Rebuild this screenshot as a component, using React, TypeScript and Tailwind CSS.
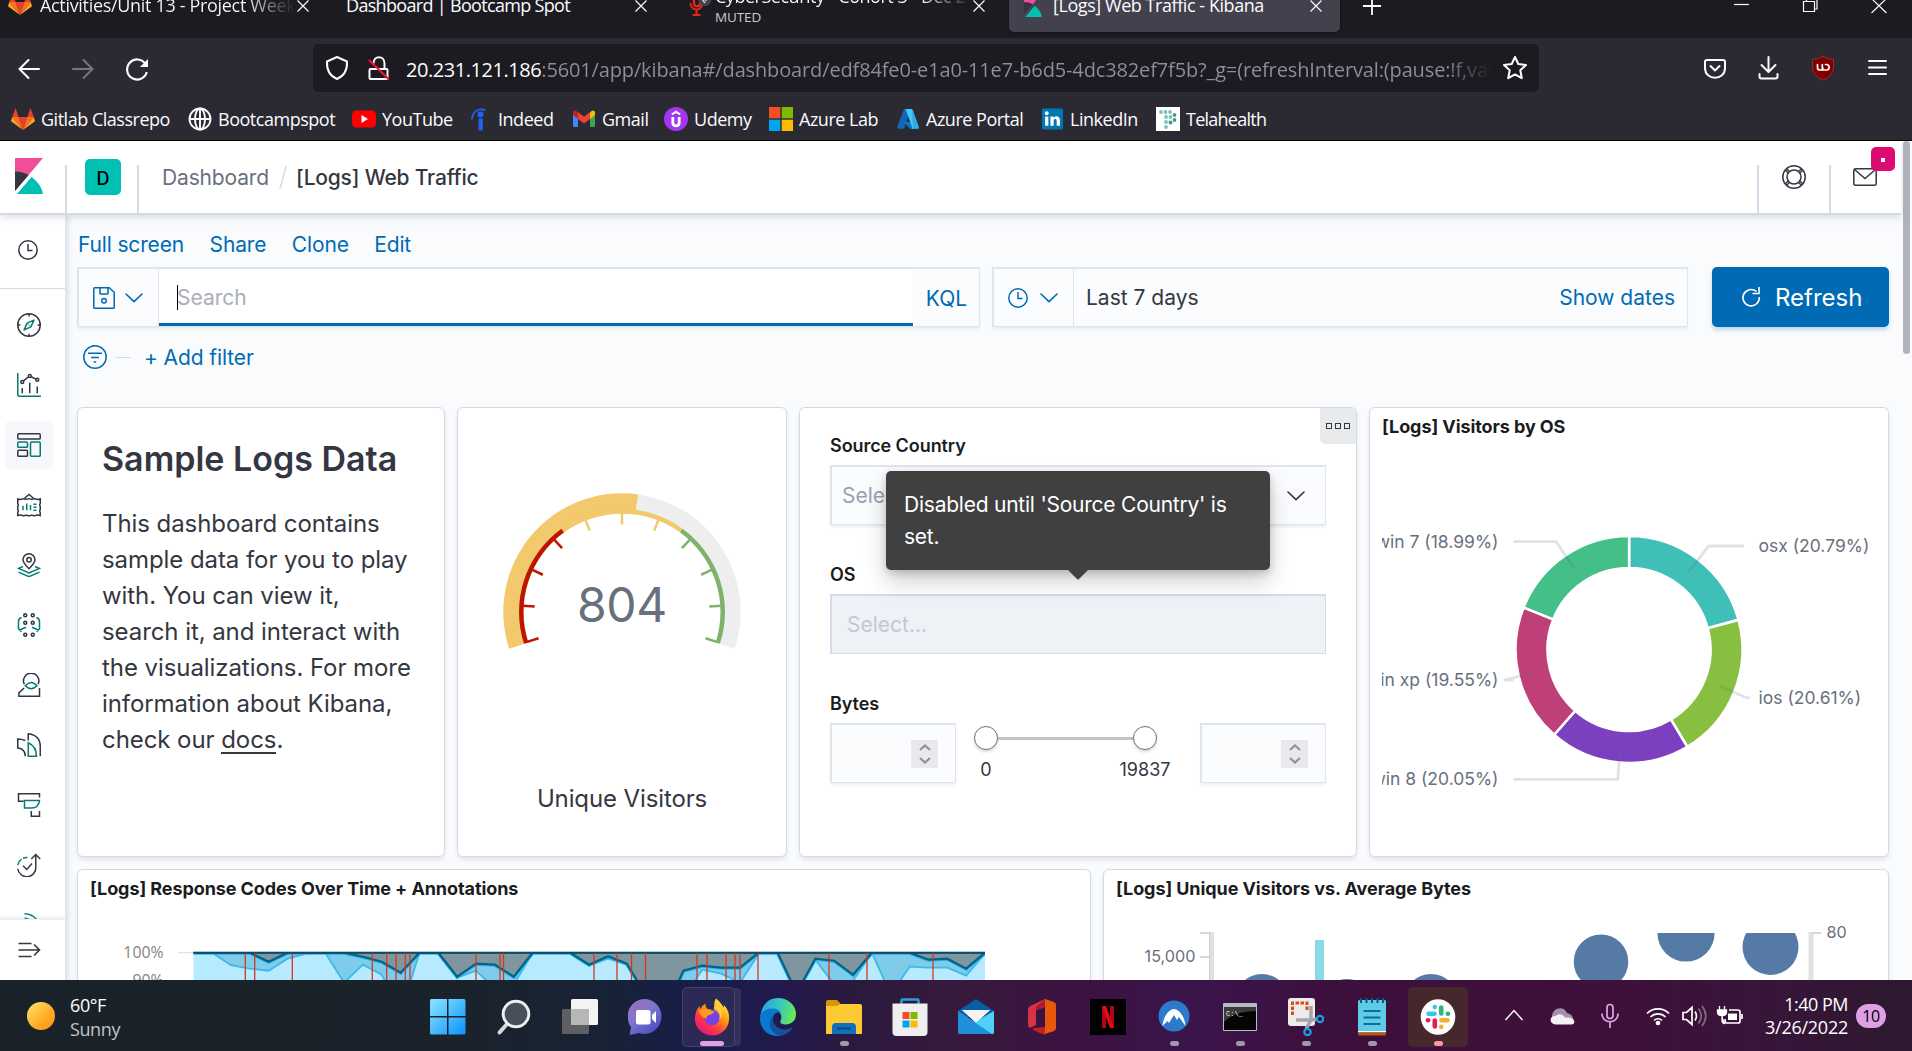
import React from "react";

type Kids = { children?: React.ReactNode; className?: string };

const polar = (cx: number, cy: number, r: number, deg: number) => {
  const a = (deg * Math.PI) / 180;
  return [cx + r * Math.sin(a), cy - r * Math.cos(a)];
};

function ringPath(cx: number, cy: number, ro: number, ri: number, a0: number, a1: number) {
  const [x0, y0] = polar(cx, cy, ro, a0);
  const [x1, y1] = polar(cx, cy, ro, a1);
  const [x2, y2] = polar(cx, cy, ri, a1);
  const [x3, y3] = polar(cx, cy, ri, a0);
  const big = a1 - a0 > 180 ? 1 : 0;
  return `M${x0} ${y0}A${ro} ${ro} 0 ${big} 1 ${x1} ${y1}L${x2} ${y2}A${ri} ${ri} 0 ${big} 0 ${x3} ${y3}Z`;
}

/* ---------- browser chrome icons ---------- */

const GitlabIcon = () => (
  <svg width="24" height="24" viewBox="0 0 24 24" className="shrink-0">
    <path d="M12 23 7.6 10h8.8z" fill="#e24329" />
    <path d="M12 23 7.6 10H1.2z" fill="#fc6d26" />
    <path d="M12 23 16.4 10h6.4z" fill="#fc6d26" />
    <path d="M1.2 10 0 14.2l12 8.8z" fill="#fca326" />
    <path d="M22.8 10 24 14.2 12 23z" fill="#fca326" />
    <path d="M1.2 10h6.4L4.6 1z" fill="#e24329" />
    <path d="M22.8 10h-6.4l3-9z" fill="#e24329" />
  </svg>
);

const KibanaLogo = ({ className }: { className: string }) => (
  <svg viewBox="0 0 28 36" preserveAspectRatio="none" className={className}>
    <path d="M0 0h28L0 33z" fill="#f04e98" />
    <path d="M0 13.6c5 0 9.600 1.300 13.600 3.500L0 33z" fill="#343741" />
    <path d="M16.500 19C22.500 23.200 26.800 29.200 28 36H2z" fill="#00bfb3" />
  </svg>
);

const Cross = ({ className }: { className: string }) => (
  <svg viewBox="0 0 12 12" className={"shrink-0 " + className} stroke="#fbfbfe" strokeWidth="1.200" fill="none">
    <path d="M.500.500l11 11M11.500.500l-11 11" />
  </svg>
);

const bookmarks: { label: string; w: string; icon: React.ReactNode }[] = [
  { label: "Gitlab Classrepo", w: "w-[177px]", icon: <GitlabIcon /> },
  {
    label: "Bootcampspot",
    w: "w-[164px]",
    icon: (
      <svg width="24" height="24" viewBox="0 0 24 24" fill="none" stroke="#fbfbfe" strokeWidth="1.900">
        <circle cx="12" cy="12" r="10.500" />
        <ellipse cx="12" cy="12" rx="5" ry="10.500" />
        <path d="M1.500 12h21M12 1.500v21" />
      </svg>
    ),
  },
  {
    label: "YouTube",
    w: "w-[114px]",
    icon: (
      <svg width="24" height="24" viewBox="0 0 24 24">
        <rect y="3.500" width="24" height="17" rx="4.500" fill="#f00" />
        <path d="M9.500 8v8l6.500-4z" fill="#fff" />
      </svg>
    ),
  },
  {
    label: "Indeed",
    w: "w-[106px]",
    icon: (
      <svg width="26" height="24" viewBox="0 0 26 24">
        <path d="M6 12.500C6 4.500 13 .500 19.500 3.500" fill="none" stroke="#2164f3" strokeWidth="1.700" />
        <circle cx="14.500" cy="7.500" r="3" fill="#2164f3" />
        <rect x="12.500" y="11.500" width="4.300" height="12" rx="1" fill="#2164f3" />
      </svg>
    ),
  },
  {
    label: "Gmail",
    w: "w-[92px]",
    icon: (
      <svg width="24" height="24" viewBox="0 0 24 24">
        <path d="M1 5.500V18.500q0 1.500 1.500 1.500H6V10z" fill="#4285f4" />
        <path d="M23 5.500V18.500q0 1.500-1.500 1.500H18V10z" fill="#34a853" />
        <path d="M18 6v6l5-4V6c0-2.500-2.500-3-3.800-1.800z" fill="#fbbc04" />
        <path d="M6 6v6L1 8V6c0-2.500 2.500-3 3.800-1.800z" fill="#c5221f" />
        <path d="M6 12V5l6 4.800L18 5v7l-6 4.600z" fill="#ea4335" />
      </svg>
    ),
  },
  {
    label: "Udemy",
    w: "w-[105px]",
    icon: (
      <svg width="24" height="24" viewBox="0 0 24 24">
        <circle cx="12" cy="12" r="12" fill="#a435f0" />
        <path d="M7.800 7.500 12 4.800l4.200 2.700" stroke="#fff" strokeWidth="2" fill="none" />
        <path d="M8.800 10v5.500c0 4.500 6.400 4.500 6.400 0V10" stroke="#fff" strokeWidth="2.800" fill="none" />
      </svg>
    ),
  },
  {
    label: "Azure Lab",
    w: "w-[127px]",
    icon: (
      <svg width="24" height="24" viewBox="0 0 24 24">
        <path d="M0 0h11.300v11.300H0z" fill="#f25022" />
        <path d="M12.700 0H24v11.300H12.700z" fill="#7fba00" />
        <path d="M0 12.700h11.300V24H0z" fill="#00a4ef" />
        <path d="M12.700 12.700H24V24H12.700z" fill="#ffb900" />
      </svg>
    ),
  },
  {
    label: "Azure Portal",
    w: "w-[145px]",
    icon: (
      <svg width="24" height="24" viewBox="0 0 24 24">
        <path d="M8.300 2h6.800L8 21.700H2q-1.300 0-.800-1.400L7.500 3q.2-.8.8-1z" fill="#1366b5" />
        <path d="M18 15H8l6 6.700h6z" fill="#0078d4" />
        <path d="M15.800 2q.6.200.9 1l6.200 17.300q.4 1.400-.9 1.400h-6.700q1.200-.4.800-1.700L9.400 2z" fill="#3ccbf4" />
        <path d="M15.800 2q.6.200.9 1l6.200 17.300q.4 1.400-.9 1.400h-5z" fill="#2892df" opacity=".6" />
      </svg>
    ),
  },
  {
    label: "LinkedIn",
    w: "w-[115px]",
    icon: (
      <svg width="23" height="24" viewBox="0 0 24 24">
        <rect x="1" y="1" width="22" height="22" rx="1.500" fill="#0077b5" />
        <circle cx="6" cy="6" r="2" fill="#fff" />
        <path d="M4.300 9.300h3.400V19H4.300zM9.800 9.300h3.300v1.400c1.600-2.600 6.700-2.300 6.700 2.800V19h-3.400v-5c0-2.600-3.200-2.500-3.200 0v5H9.800z" fill="#fff" />
      </svg>
    ),
  },
  {
    label: "Telahealth",
    w: "w-[120px] tracking-[-0.75px]",
    icon: (
      <svg width="24" height="24" viewBox="0 0 24 24">
        <path d="M0 0h24v24H0z" fill="#fff" />
        {[
          [5, 5], [9.500, 5], [14, 5], [18.500, 8], [18.500, 13], [14.500, 15.500], [10, 10], [10, 15], [10, 20], [14.500, 10],
        ].map(([x, y], i) => (
          <circle key={i} cx={x} cy={y} r="1.900" fill={i > 2 && i < 6 ? "#3f9c94" : "#7cc2b8"} />
        ))}
      </svg>
    ),
  },
];

function Chrome() {
  return (
    <div className="shrink-0 border-b border-black bg-[#2b2a33] font-['Open_Sans',sans-serif] text-[18px] tracking-[-0.48px] whitespace-nowrap text-[#fbfbfe]">
      {/* tab strip */}
      <div className="flex h-[38px] overflow-hidden bg-[#1c1b22]">
        <div className="flex h-[10px] w-[332px] shrink-0 items-center pl-2">
          <div className="-mt-[3px] flex h-[24px] items-center">
            <GitlabIcon />
          </div>
          <div className="ml-2 w-[256px] shrink-0 overflow-hidden bg-linear-to-r from-[#fbfbfe] from-80% to-[#1c1b22] bg-clip-text tracking-[-0.32px] text-transparent">
            Activities/Unit 13 - Project Week
          </div>
          <Cross className="mt-0.5 ml-px size-3" />
        </div>
        <div className="flex h-[10px] w-[345px] shrink-0 items-center pl-[14px] tracking-[-0.68px]">
          <span className="w-[289px] shrink-0">Dashboard | Bootcamp Spot</span>
          <Cross className="mt-0.5 size-3" />
        </div>
        <div className="flex w-[332px] shrink-0 pl-[12px]">
          <svg width="24" height="18" viewBox="0 0 24 18" fill="none" className="shrink-0">
            <path d="M5 0v3c0 4.500 6 4.500 6 0V0" stroke="#e3261a" strokeWidth="2.400" />
            <path d="M1.500 3c0 8.500 12 8.500 12 0M7.500 9.500v5.200M3.500 15h8" stroke="#e3261a" strokeWidth="2" />
            <circle cx="16" cy="-.500" r="6.500" fill="#42414d" />
            <path d="M13-1l3 4M16-2l1 3" stroke="#cfcfd8" strokeWidth="1.500" />
          </svg>
          <div className="-mt-[17px] ml-[2px] w-[258px] shrink-0">
            <div className="h-[26px] bg-linear-to-r from-[#fbfbfe] from-80% to-[#1c1b22] bg-clip-text leading-[26px] text-transparent">
              CyberSecurity - Cohort 3 - Dec 2
            </div>
            <div className="text-[13.500px] leading-4 tracking-[-0.1px] text-[#c9c9d0]">MUTED</div>
          </div>
          <Cross className="size-3" />
        </div>
        <div className="h-[32px] w-[331px] shrink-0 rounded-b-[5px] bg-[#42414d] shadow-[0_0_3px_rgba(0,0,0,0.6)]">
          <div className="flex h-[10px] items-center pl-[15px]">
            <KibanaLogo className="h-[24px] w-[18px]" />
            <span className="ml-[11px] w-[256px] tracking-[-0.44px]">[Logs] Web Traffic - Kibana</span>
            <Cross className="mt-0.5 ml-px size-3" />
          </div>
        </div>
        <svg width="572" height="38" viewBox="1340 0 572 38" fill="none" stroke="#fbfbfe">
          <path d="M1363 6h18M1372-3v18" strokeWidth="1.800" />
          <path d="M1734 4.500h15" strokeWidth="1.200" />
          <path d="M1803.500 1.500h11v10h-11zM1806.500 1.500v-3M1814.500 9h2.500V-2" strokeWidth="1.200" />
          <path d="M1871.500-1.500l15 14.500M1886.500-1.500l-15 14.500" strokeWidth="1.200" />
        </svg>
      </div>
      {/* toolbar */}
      <div className="flex h-[60px] items-center">
        <svg width="313" height="60" viewBox="0 38 313 60" fill="none" stroke="#fbfbfe" strokeWidth="2">
          <path d="M39 69H19.500M28.500 60l-9 9 9 9" strokeLinecap="round" />
          <path d="M73 69h19.500M83.500 60l9 9-9 9" stroke="#77767f" strokeLinecap="round" />
          <path d="M145.500 64a10 10 0 1 0 1.300 8" strokeWidth="2.200" />
          <path d="M148 59v8h-8z" fill="#fbfbfe" stroke="none" />
        </svg>
        <div className="flex h-[48px] w-[1226px] items-center overflow-hidden rounded-[5px] bg-[#1c1b22]">
          <svg width="93" height="48" viewBox="313 44 93 48" fill="none" stroke="#fbfbfe" strokeWidth="2" className="shrink-0">
            <path d="M337 57l10 4.500c.5 9-3 14.500-10 17.500-7-3-10.500-8.500-10-17.500z" strokeLinejoin="round" />
            <path d="M370.500 69h16q1 0 1 1v8q0 1-1 1h-16q-1 0-1-1v-8q0-1 1-1zM373.500 63.500c0-8.500 11-8.500 11 0V69" />
            <path d="M369 60l20 19.500" stroke="#ff0d3c" />
          </svg>
          <div className="mt-[3px] flex w-[1088px] overflow-hidden text-[20px]">
            <span className="tracking-[-0.45px]">20.231.121.186</span>
            <span className="bg-linear-to-r from-[#8f8f99] from-95% to-[#1c1b22] bg-clip-text tracking-[-0.14px] text-transparent">
              :5601/app/kibana#/dashboard/edf84fe0-e1a0-11e7-b6d5-4dc382ef7f5b?_g=(refreshInterval:(pause:!f,val
            </span>
          </div>
          <svg width="26" height="26" viewBox="0 0 26 26" className="ml-[8px] shrink-0" fill="none" stroke="#fbfbfe" strokeWidth="2" strokeLinejoin="round">
            <path d="M13 2l3.300 7 7.700 1-5.700 5.300 1.500 7.900L13 19.400l-6.800 3.800 1.500-7.900L2 10l7.700-1z" />
          </svg>
        </div>
        <svg width="373" height="60" viewBox="1539 38 373 60" fill="none" stroke="#fbfbfe" strokeWidth="2" strokeLinecap="round" strokeLinejoin="round">
          <path d="M1707 60h16q2 0 2 2v6c0 13-20 13-20 0v-6q0-2 2-2zM1710.500 66l4.500 4.500 4.500-4.500" />
          <path d="M1768.500 57v14.500M1761.500 65l7 7 7-7M1759.500 74v2.500q0 2 2 2h14q2 0 2-2V74" />
          <path d="M1823 56.500q5 3 10.500 3v8q0 8-10.500 12.500-10.500-4.500-10.500-12.500v-8q5.500 0 10.500-3z" fill="#800000" stroke="#a33" strokeWidth=".800" />
          <path d="M1817.500 64.500v3q0 2.500 2.400 2.500h2.400v-5.500M1825.500 64.500h1a2.600 2.750 0 1 1 0 5.500h-3.800v-2.500" strokeWidth="1.700" />
          <path d="M1869 61h17M1869 67.500h17M1869 74h17" />
        </svg>
      </div>
      {/* bookmarks */}
      <div className="flex h-[42px] items-center pl-[11px]">
        {bookmarks.map((b) => (
          <div key={b.label} className={"flex shrink-0 items-center " + b.w}>
            {b.icon}
            <span className="ml-[6px] pt-px">{b.label}</span>
          </div>
        ))}
      </div>
    </div>
  );
}

/* ---------- Kibana side navigation ---------- */

const D = "#343741";
const G = "#017d73";

const NavIcon = ({ children }: Kids) => (
  <svg width="24" height="24" viewBox="0 0 32 32" fill="none" strokeWidth="2" stroke={D}>
    {children}
  </svg>
);

const navIcons: React.ReactNode[] = [
  <NavIcon key="discover">
    <circle cx="16" cy="16" r="15" />
    <path d="M16 1v3.500M16 27.500V31M1 16h3.500M27.500 16H31" />
    <path d="M22.500 9.500l-4 9-9 4 4-9z" stroke={G} strokeLinejoin="round" />
    <path d="M13.500 13.500l5 5" stroke={G} strokeWidth="1" />
  </NavIcon>,
  <NavIcon key="visualize">
    <path d="M1 0v29q0 2 2 2h29" stroke={G} />
    <path d="M7 27v-7M17 27V13M27 27v-9M8.500 10.500l7-5.500M19 5l7 3.500" />
    <circle cx="7" cy="12" r="2" />
    <circle cx="17" cy="4" r="2" />
    <circle cx="27" cy="9" r="2" />
  </NavIcon>,
  <NavIcon key="dashboard">
    <rect x="1" y="1" width="30" height="7" rx="1.500" />
    <rect x="1" y="12" width="13" height="7" rx="1.500" stroke={G} />
    <rect x="18" y="12" width="13" height="19" rx="1.500" stroke={G} />
    <rect x="1" y="23" width="13" height="8" rx="1.500" />
  </NavIcon>,
  <NavIcon key="canvas">
    <path d="M1 8q4 1.500 7.500-.500 3.500 1.500 7.500 0 4 1.500 7.500 0 4 2 7.500.500v6q-1.500 2 0 4v4q-1.500 2 0 4v4q-4-1.500-7.500.500-4-1.500-7.500 0-4-1.500-7.500 0-3.500-2-7.500-.500v-4q1.500-2 0-4v-4q1.500-2 0-4zM10 7l6-5 6 5" />
    <path d="M8 23v-6M13 23v-9M18 23v-7M22 15h4M22 19h4M22 23h4" stroke={G} />
  </NavIcon>,
  <NavIcon key="maps">
    <path d="M16 21C10 15 8 12 8 9a8 8 0 0 1 16 0c0 3-2 6-8 12z" />
    <circle cx="16" cy="9" r="3" />
    <path d="M8 18l-6 2.500 14 6 14-6-6-2.500M2 25.500l14 6 14-6" stroke={G} />
  </NavIcon>,
  <NavIcon key="ml">
    <circle cx="11" cy="3" r="2" />
    <circle cx="21" cy="3" r="2" />
    <circle cx="11" cy="13" r="2" />
    <circle cx="21" cy="13" r="2" />
    <circle cx="11" cy="29" r="2" />
    <circle cx="21" cy="29" r="2" />
    <path d="M6 6q-4 1.500-4 5v10l4 4M26 6q4 1.500 4 5v10l-4 4M3 23l9-4M29 23l-9-4" stroke={G} />
  </NavIcon>,
  <NavIcon key="infra">
    <path d="M9.800 15A10.200 10.200 0 1 1 28 15" />
    <path d="M9.500 20L2.500 26.500V31H30V20" />
    <path d="M11 17q8-9 15.500 0-7.500 8-15.500 0z" stroke={G} />
  </NavIcon>,
  <NavIcon key="logs">
    <path d="M15 10V1q16 2 16 17v13M11 10Q6 8 1 8v12q10 1 10 11" />
    <path d="M15 13q11 5 11 18H15z" stroke={G} />
  </NavIcon>,
  <NavIcon key="apm">
    <path d="M9 11H2V1h28v5M19 24v7h11v-7" />
    <path d="M10 10h20q-1 10-11 10h-9z" stroke={G} />
  </NavIcon>,
  <NavIcon key="uptime">
    <path d="M1 21a12 12 0 0 0 24-3V2M19 8l6-6 6 6M8 17l5 5 7-8" />
    <path d="M1 16q1-5 5-8M8 7q3-1.500 6-1" stroke={G} />
  </NavIcon>,
  <NavIcon key="siem">
    <path d="M10 1q11 0 17 9M10 7q8 0 12 9M10 13q5 0 7 7" stroke={G} />
  </NavIcon>,
];

const Clock = ({ className }: { className: string }) => (
  <svg viewBox="0 0 20 20" fill="none" strokeWidth="1.500" stroke="currentColor" className={className}>
    <circle cx="10" cy="10" r="9.200" />
    <path d="M10 4v6.500h4.500" />
  </svg>
);

const Chevron = ({ className }: { className: string }) => (
  <svg viewBox="0 0 18 10" fill="none" strokeWidth="1.600" stroke="currentColor" strokeLinecap="round" strokeLinejoin="round" className={className}>
    <path d="M1 1l8 7.700L17 1" />
  </svg>
);

function SideNav() {
  return (
    <div className="relative z-10 flex w-[67px] shrink-0 flex-col overflow-hidden border-r-2 border-[#e1e5ee] bg-white shadow-[2px_0_5px_rgba(152,162,179,0.25)]">
      <div className="flex h-[74px] shrink-0 items-center border-b border-[#d3dae6] pl-[18px] text-[#343741]">
        <Clock className="mb-[3px] size-5" />
      </div>
      <div className="flex h-[630px] flex-col overflow-hidden pt-[6px]">
        {navIcons.map((icon, i) => (
          <div key={i} className="flex h-[60px] shrink-0 items-center pl-[5px]">
            <div className={i === 2 ? "flex size-12 items-center justify-center rounded-[5px] bg-[#f5f7fa]" : "flex size-12 items-center justify-center"}>
              {icon}
            </div>
          </div>
        ))}
      </div>
      <div className="z-10 flex h-[61px] shrink-0 items-center border-t border-[#eef0f4] bg-white pl-[17px] shadow-[0_-1px_4px_rgba(152,162,179,0.3)]">
        <svg width="24" height="18" viewBox="0 0 24 18" fill="none" stroke={D} strokeWidth="1.600">
          <path d="M1.500 2.500h13M1.500 9h21M1.500 15.500h13M17 3.500L22.500 9 17 14.500" />
        </svg>
      </div>
    </div>
  );
}

/* ---------- header ---------- */

function Header() {
  return (
    <div className="relative z-20 flex h-[74px] w-[1901px] shrink-0 border-b-2 border-[#d3dae6] bg-white shadow-[0_3px_6px_rgba(152,162,179,0.3)]">
      <div className="flex w-[67px] items-end justify-between">
        <KibanaLogo className="mb-[19px] ml-[15px] h-[36px] w-[28px]" />
        <div className="h-[48px] w-[2px] bg-[#d3dae6]" />
      </div>
      <div className="flex w-[72px] items-end justify-between pl-[18px]">
        <div className="mb-[18px] flex size-9 items-center justify-center rounded-[5px] bg-[#00bfb3] pt-[2px] text-[18px] font-medium text-black">D</div>
        <div className="h-[48px] w-[2px] bg-[#d3dae6]" />
      </div>
      <div className="flex h-[72px] flex-1 items-center pl-[23px] text-[21px] tracking-[-0.15px]">
        <span className="pt-[2px] text-[#69707d]">Dashboard</span>
        <svg width="8" height="23" viewBox="0 0 8 23" className="mr-[9px] ml-[10px]">
          <path d="M7 0L1 23" stroke="#d3dae6" strokeWidth="1.500" />
        </svg>
        <span className="pt-[2px] font-medium tracking-[-0.2px] text-[#343741]">[Logs] Web Traffic</span>
      </div>
      <div className="flex w-[144px] items-end">
        <div className="h-[48px] w-[2px] bg-[#d3dae6]" />
        <div className="flex h-[72px] w-[70px] items-center justify-center">
          <svg width="24" height="24" viewBox="0 0 24 24" fill="none" stroke={D} strokeWidth="1.500">
            <circle cx="12" cy="12" r="11.200" />
            <circle cx="12" cy="12" r="7" />
            <path d="M4.500 3.800l3.300 3M3.300 5.200l3.200 3M19.500 3.800l-3.300 3M20.700 5.200l-3.200 3M4.500 20.200l3.300-3M3.300 18.800l3.200-3M19.500 20.200l-3.300-3M20.700 18.800l-3.200-3" />
          </svg>
        </div>
        <div className="h-[48px] w-[2px] bg-[#d3dae6]" />
        <div className="relative flex h-[72px] flex-1 items-center pl-[22px]">
          <svg width="24" height="18" viewBox="0 0 24 18" fill="none" stroke={D} strokeWidth="1.500">
            <rect x=".800" y=".800" width="22.400" height="16.400" rx="2" />
            <path d="M1.500 1.500L12 10.500l10.500-9" />
          </svg>
          <div className="absolute top-[6px] left-[40px] flex size-6 items-center justify-center rounded-[5px] bg-[#dd0a73]">
            <div className="mt-[2px] size-1 bg-white" />
          </div>
        </div>
      </div>
    </div>
  );
}

/* ---------- query bar ---------- */

const field = "border-t-2 border-l-2 border-r border-b border-[#e0e4ee] bg-[#fbfcfd] shadow-[0_3px_3px_-1px_rgba(152,162,179,0.2)]";

function QueryBar() {
  return (
    <div className="text-[21px] whitespace-nowrap text-[#006bb4]">
      <div className="mt-[12px] flex h-[33px] items-center gap-[25.500px] pt-[2px] pl-[1px] tracking-[-0.15px]">
        <span>Full screen</span>
        <span>Share</span>
        <span>Clone</span>
        <span>Edit</span>
      </div>
      <div className="mt-[7px] flex h-[60px]">
        <div className={"flex w-[903px] " + field}>
          <div className="flex w-[80px] items-center border-r border-[#e0e4ee] pl-[14px]">
            <svg width="22" height="22" viewBox="0 0 22 22" fill="none" stroke="#006bb4" strokeWidth="1.500">
              <path d="M1.700.800h14.500l5 4.500v15q0 1-1 1H1.700q-.900 0-.900-1V1.700q0-.900.900-.900zM7 1v5.200q0 .800.800.800h6.400q.800 0 .800-.800V1" />
              <circle cx="11" cy="13.800" r="2.300" />
            </svg>
            <Chevron className="ml-[10px] h-[10px] w-[18px]" />
          </div>
          <div className="flex flex-1 items-center border-b-[3px] border-[#006bb4] bg-white pl-[18px] text-[#abafb8]">
            <div className="mt-[3px] h-[25px] w-px bg-black" />
            <span className="-ml-px pt-[4px]">Search</span>
          </div>
          <div className="flex w-[66px] items-center justify-center pt-[2px] pl-px">KQL</div>
        </div>
        <div className={"ml-[12px] flex w-[696px] items-center " + field}>
          <div className="flex h-full w-[80px] items-center border-r border-[#e0e4ee] pl-[14px]">
            <Clock className="size-5" />
            <Chevron className="ml-[12px] h-[10px] w-[18px]" />
          </div>
          <span className="ml-[12px] flex-1 pt-px text-[#343741]">Last 7 days</span>
          <span className="mr-[12px] pt-px">Show dates</span>
        </div>
        <div className="ml-[24px] flex w-[177px] items-center rounded-[5px] bg-[#006bb4] pl-[29px] text-[24px] text-white shadow-[0_3px_4px_rgba(0,107,180,0.25)]">
          <svg width="20" height="22" viewBox="0 0 20 22" fill="none" stroke="#fff" strokeWidth="1.600">
            <path d="M15.500 5.500A8.200 8.200 0 1 0 18.300 11M18 1v6.500h-6.500" />
          </svg>
          <span className="ml-[14px] pt-[2px]">Refresh</span>
        </div>
      </div>
      <div className="mt-[12px] flex h-[36px] items-center pl-[6px]">
        <svg width="24" height="24" viewBox="0 0 24 24" fill="none" stroke="#006bb4" strokeWidth="1.500">
          <circle cx="12" cy="12" r="11.200" />
          <path d="M5 8.200h14M8 12.500h8M10.800 17h2.400" />
        </svg>
        <div className="ml-[9px] h-px w-[15px] bg-[#d3dae6]" />
        <span className="ml-[13px] pt-[2px] tracking-[-0.1px]">+ Add filter</span>
      </div>
    </div>
  );
}

/* ---------- panels ---------- */

const panel = "relative overflow-hidden rounded-[6px] border border-[#d3dae6] bg-white shadow-[0_3px_4px_rgba(152,162,179,0.22)] ";

const Title = ({ children }: Kids) => (
  <div className="flex h-[36px] items-center pl-[12px] text-[18px] font-bold tracking-[-0.08px] text-[#1a1c21]">{children}</div>
);

function Gauge() {
  const cx = 622;
  const cy = 612;
  const tone = (d: number) => (d < -36 ? "#bd1500" : d > 36 ? "#7eb26d" : "#f2c96d");
  return (
    <svg width="328" height="448" viewBox="458 408 328 448" className="block">
      <path d={ringPath(cx, cy, 118.700, 98.500, 7.800, 108)} fill="#eee" />
      <path d={ringPath(cx, cy, 118.700, 98.500, -108, 7.800)} fill="#f2c96d" />
      <path d={ringPath(cx, cy, 103, 98.500, -108, -36)} fill="#bd1500" />
      <path d={ringPath(cx, cy, 103, 98.500, -36, 36)} fill="#f2c96d" />
      <path d={ringPath(cx, cy, 103, 98.500, 36, 108)} fill="#7eb26d" />
      {[-107.500, -86.400, -64.800, -43.200, -21.600, 0, 21.600, 43.200, 64.800, 86.400, 107.500].map((d) => {
        const [x1, y1] = polar(cx, cy, 99.500, d);
        const [x2, y2] = polar(cx, cy, 87.500, d);
        return <line key={d} x1={x1} y1={y1} x2={x2} y2={y2} stroke={tone(d)} strokeWidth="2.500" />;
      })}
      <text x="622" y="622.300" textAnchor="middle" fontSize="48" letterSpacing="-0.3" fill="#69707d">
        804
      </text>
      <text x="622" y="807" textAnchor="middle" fontSize="24" letterSpacing="-0.12" fill="#343741">
        Unique Visitors
      </text>
    </svg>
  );
}

const NumberField = () => (
  <div className={"flex h-[60px] w-[126px] items-center justify-end pr-[17px] " + field}>
    <div className="flex h-[28px] w-[27px] flex-col items-center justify-center gap-[6px] bg-[#e9e8ec] text-[#8f8f9d]">
      <svg width="12" height="7" viewBox="0 0 12 7" fill="none" stroke="currentColor" strokeWidth="2.200">
        <path d="M1 6l5-4.500L11 6" />
      </svg>
      <svg width="12" height="7" viewBox="0 0 12 7" fill="none" stroke="currentColor" strokeWidth="2.200">
        <path d="M1 1l5 4.500L11 1" />
      </svg>
    </div>
  </div>
);

const Label = ({ children }: Kids) => (
  <div className="mb-[6px] flex h-[28px] items-center pt-px text-[18px] font-semibold tracking-[-0.07px] text-[#1a1c21]">{children}</div>
);

const Thumb = () => <div className="size-6 rounded-full border-[1.500px] border-[#69707d] bg-white shadow-[0_2px_3px_rgba(0,0,0,0.15)]" />;

function Controls() {
  return (
    <div className={panel + "w-[558px] px-[30px] pt-[23px]"}>
      <div className="absolute top-0 right-0 flex h-[36px] w-[36px] items-center justify-center gap-[3px] rounded-bl-[5px] bg-[#e9eaec]">
        <div className="size-[6px] border-[1.500px] border-[#343741]" />
        <div className="size-[6px] border-[1.500px] border-[#343741]" />
        <div className="size-[6px] border-[1.500px] border-[#343741]" />
      </div>
      <Label>Source Country</Label>
      <div className={"flex h-[60px] items-center justify-between pr-[20px] pl-[10px] text-[21px] text-[#98a2b3] " + field}>
        Select...
        <Chevron className="h-[10px] w-[18px] text-[#343741]" />
      </div>
      <div className="mt-[35px]">
        <Label>OS</Label>
      </div>
      <div className="flex h-[60px] items-center border-t-2 border-r border-b border-l-2 border-[#d3dce9] bg-[#eef2f7] pl-[15px] text-[21px] text-[#c2c8d2]">
        Select...
      </div>
      <div className="mt-[35px]">
        <Label>Bytes</Label>
      </div>
      <div className="flex">
        <NumberField />
        <div className="mr-[43px] ml-[18px] w-[183px] pt-[3px]">
          <div className="flex items-center">
            <Thumb />
            <div className="h-[3px] flex-1 bg-[#c2c4c9]" />
            <Thumb />
          </div>
          <div className="mt-[8px] flex justify-between text-[18px] leading-6 text-[#343741]">
            <span className="flex w-6 justify-center">0</span>
            <span className="flex w-6 justify-center">19837</span>
          </div>
        </div>
        <NumberField />
      </div>
      {/* tooltip */}
      <div className="absolute top-[63px] left-[86px] h-[99px] w-[384px] rounded-[5px] bg-[#404040] pt-[18px] pl-[18px] text-[21px] leading-8 tracking-[-0.23px] text-white shadow-[0_12px_24px_rgba(0,0,0,0.18),0_3px_9px_rgba(0,0,0,0.18)]">
        Disabled until 'Source Country' is
        <br />
        set.
        <svg width="22" height="11" viewBox="0 0 22 11" className="absolute top-[98px] left-[181px]">
          <path d="M0 0h22L12 10q-1 1-2 0z" fill="#404040" />
        </svg>
      </div>
    </div>
  );
}

const slices = [
  { v: 20.79, c: "#40bfb8" },
  { v: 20.61, c: "#87bf40" },
  { v: 20.05, c: "#7a40bf" },
  { v: 19.55, c: "#bf4078" },
  { v: 18.99, c: "#43bf87" },
];

function Donut() {
  let a = 0;
  return (
    <svg width="518" height="412" viewBox="1370 444 518 412" className="block">
      {slices.map((s) => {
        const from = a;
        a += s.v * 3.6012;
        return <path key={s.c} d={ringPath(1629, 649.500, 113.500, 81.500, from, a)} fill={s.c} stroke="#fff" strokeWidth="2.600" />;
      })}
      <g fill="none" stroke="#69707d" strokeOpacity=".2" strokeWidth="2.800">
        <path d="M1688.500 572.300L1708.600 546H1743.800" />
        <path d="M1719.200 685.700L1746.300 697.700H1749.800" />
        <path d="M1574.100 568.300L1556.100 541.700H1513.500" />
        <path d="M1533.600 672.700L1504 680H1513.500" />
        <path d="M1620.200 746.700L1617.700 779.300H1513.500" />
      </g>
      <g fontSize="17.500" fill="#69707d">
        <text x="1758.500" y="552">osx (20.79%)</text>
        <text x="1758.500" y="704.200">ios (20.61%)</text>
      </g>
      <svg x="1382" y="500" width="130" height="320" viewBox="1382 500 130 320" fontSize="17.500" fill="#69707d" textAnchor="end">
        <text x="1498.500" y="547.900">win 7 (18.99%)</text>
        <text x="1498.500" y="686">win xp (19.55%)</text>
        <text x="1498.500" y="785.200">win 8 (20.05%)</text>
      </svg>
    </svg>
  );
}

/* Drop below the 100% line, in pixels, for each of the time buckets. */
const upper = [0, 0, 0, 0, 9, 0, 0, 0, 0, 4, 9, 20, 0, 0, 24, 11, 12, 24, 0, 0, 0, 12, 3.500, 11, 42, 60, 18, 13, 15, 15, 0, 0, 40, 6, 8, 22, 0, 0, 0, 7, 6, 16, 0];
const lower = [0, 0, 12.500, 16, 18, 6, 1, 0, 30, 12, 22, 60, 0, 0, 25, 18, 36, 32, 0, 0, 0, 12.500, 6, 12, 42, 60, 45, 17, 21, 30, 1, 0, 40, 7, 32, 28, 0, 42, 14, 15, 15, 23, 1];
const marks = [245.3, 254.7, 292.3, 372.3, 386.7, 396, 405.3, 410, 476, 500, 503.500, 594, 617, 631.500, 645.500, 697, 707, 726, 735, 740, 758, 829, 867, 933];

function ResponseCodes() {
  const pt = (v: number[]) => v.map((d, i) => `${193.300 + i * 18.850} ${952.700 + d}`).join("L");
  const L = 193.300;
  const R = 985;
  return (
    <svg width="1012" height="150" viewBox="78 906 1012 150" className="block">
      <defs>
        <clipPath id="area">
          <path d="M193.300 951.700H985V1060H193.300z" />
        </clipPath>
      </defs>
      <g fill="#848484" fontSize="15.800" className="font-['Open_Sans',sans-serif]" textAnchor="end">
        <text x="163.500" y="957.500">100%</text>
        <text x="163.500" y="986">90%</text>
      </g>
      <path d="M178 952.700h15" stroke="#ddd" />
      <g clipPath="url(#area)">
        <path d={`M${L} 952.700H${R}V1056H${L}Z`} fill="#b7e9ff" />
        <path d={`M${L} 952.700L${pt(lower)}Z`} fill="#7ecbea" stroke="#3cb9ea" strokeWidth="1.800" />
        <path d={`M${L} 952.700L${pt(upper)}Z`} fill="#80969f" stroke="#2fb2e6" strokeWidth="4" />
        <path d={`M${L} 952.700L${pt(upper)}Z`} fill="#80969f" stroke="#00648a" strokeWidth="2.200" />
        <path d={`M${L} 952.700H${R}`} stroke="#16495f" strokeWidth="2" />
        {marks.map((x) => (
          <path key={x} d={`M${x} 953V1056`} stroke="#d6361e" strokeWidth="1.300" />
        ))}
      </g>
    </svg>
  );
}

function VisitorsBytes() {
  return (
    <svg width="784" height="150" viewBox="1104 906 784 150" className="block">
      <defs>
        <clipPath id="plot">
          <path d="M1215 933h595v130h-595z" />
        </clipPath>
      </defs>
      <path d="M1211.500 932v124M1811 932v124" stroke="#e0e0e0" strokeWidth="5" />
      <path d="M1200 933h10M1200 957h9M1812 933h9" stroke="#d6d6d6" strokeWidth="2" />
      <path d="M1209.500 932v124" stroke="#d0d0d0" strokeWidth="1" />
      <path d="M1315 940h9v116h-9z" fill="#8bd9e6" />
      <g fill="#547aa5" clipPath="url(#plot)">
        <circle cx="1262" cy="1001" r="27" />
        <circle cx="1347" cy="1006" r="27" />
        <circle cx="1431" cy="1001" r="27" />
        <circle cx="1601" cy="961.700" r="27.300" />
        <circle cx="1686" cy="933" r="28.600" />
        <circle cx="1770.500" cy="947" r="28" />
      </g>
      <g fill="#69707d" fontSize="16.200">
        <text x="1195.500" y="962.200" textAnchor="end">15,000</text>
        <text x="1826.500" y="938">80</text>
      </g>
    </svg>
  );
}

function Panels() {
  return (
    <div className="mt-[32px] flex w-[1812px] flex-col gap-[12px] whitespace-nowrap">
      <div className="flex h-[450px] gap-[12px]">
        <div className={panel + "w-[368px] pt-[29px] pl-[24px] text-[#343741]"}>
          <div className="text-[34px] leading-[44px] font-semibold">Sample Logs Data</div>
          <div className="mt-[25px] text-[24px] leading-9 tracking-[-0.07px]">
            This dashboard contains
            <br />
            sample data for you to play
            <br />
            with. You can view it,
            <br />
            search it, and interact with
            <br />
            the visualizations. For more
            <br />
            information about Kibana,
            <br />
            check our <span className="inline-block h-[32px] border-b-2 border-[#343741]">docs</span>.
          </div>
        </div>
        <div className={panel + "w-[330px]"}>
          <Gauge />
        </div>
        <Controls />
        <div className={panel + "flex-1"}>
          <Title>[Logs] Visitors by OS</Title>
          <Donut />
        </div>
      </div>
      <div className="flex h-[190px] gap-[12px]">
        <div className={panel + "w-[1014px]"}>
          <Title>[Logs] Response Codes Over Time + Annotations</Title>
          <ResponseCodes />
        </div>
        <div className={panel + "flex-1"}>
          <Title>[Logs] Unique Visitors vs. Average Bytes</Title>
          <VisitorsBytes />
        </div>
      </div>
    </div>
  );
}

/* ---------- taskbar ---------- */

const taskIcons: { name: string; dot?: string; icon: React.ReactNode }[] = [
  {
    name: "start",
    icon: (
      <svg width="36" height="36" viewBox="0 0 36 36">
        <defs>
          <linearGradient id="win" x1="0" y1="0" x2="1" y2="1">
            <stop offset="0" stopColor="#8be6ff" />
            <stop offset="1" stopColor="#0a93fb" />
          </linearGradient>
        </defs>
        <path d="M1.500 0H17v17H0V1.500Q0 0 1.500 0zM18.500 0H34q1.500 0 1.500 1.500V17h-17zM0 18.500h17v17H1.500Q0 35.500 0 34zM18.500 18.500h17V34q0 1.500-1.500 1.500H18.500z" fill="url(#win)" />
      </svg>
    ),
  },
  {
    name: "search",
    icon: (
      <svg width="36" height="38" viewBox="0 0 36 38">
        <path d="M11 26L3.500 34.500" stroke="#d9dadb" strokeWidth="4" strokeLinecap="round" />
        <circle cx="20" cy="16" r="12.800" fill="#45505a" stroke="#eeeeef" strokeWidth="3" />
      </svg>
    ),
  },
  {
    name: "tasks",
    icon: (
      <svg width="36" height="36" viewBox="0 0 36 36">
        <rect x="0" y="10" width="27" height="25" rx="1.500" fill="#5f5f61" />
        <rect x="9" y="0" width="27" height="26" rx="1.500" fill="#f4f4f4" />
        <path d="M9 10h18v16H9z" fill="#b6b7b9" />
      </svg>
    ),
  },
  {
    name: "chat",
    icon: (
      <svg width="36" height="38" viewBox="0 0 36 38">
        <defs>
          <linearGradient id="chat" x1="0" y1="0" x2=".7" y2="1">
            <stop offset="0" stopColor="#a36bb5" />
            <stop offset=".5" stopColor="#7f76d0" />
            <stop offset="1" stopColor="#4a4dc4" />
          </linearGradient>
        </defs>
        <path d="M18 1a17 17.500 0 1 1-7 34L1.500 37 3 29A17 17.500 0 0 1 18 1z" fill="url(#chat)" />
        <rect x="8" y="12" width="14.500" height="14.500" rx="2" fill="#fff" />
        <path d="M24 17l4-4v12l-4-4z" fill="#fff" />
      </svg>
    ),
  },
  {
    name: "firefox",
    icon: (
      <svg width="36" height="38" viewBox="0 0 36 38">
        <defs>
          <linearGradient id="ff" x1=".9" y1=".05" x2=".25" y2="1">
            <stop offset="0" stopColor="#fff44f" />
            <stop offset=".4" stopColor="#ff980e" />
            <stop offset=".7" stopColor="#ff3647" />
            <stop offset="1" stopColor="#e31587" />
          </linearGradient>
        </defs>
        <path d="M22 .500c5 4 6 7 8 9 0-1.500 0-2-.500-3 5 5 6 10 5.500 15A17 16.500 0 0 1 1 20.500C1 15 3 11 5.500 8c0 0 .500 2.500 1 3 1-2.500 3-4.500 5-5.500-.500 2 .500 4 2 5.500 3 0 5 1 6 2 1-4 0-9 2.500-12.500z" fill="url(#ff)" />
        <circle cx="18" cy="19.500" r="7.800" fill="#7542e5" />
        <path d="M5.500 12c5-2.500 9 0 14 1 1 2-2 3.500-4.500 4-2.500 1-3 2.500-2 4-4-1-8-5-7.500-9z" fill="#ff9a1f" />
        <path d="M20 10c5 1 7 7 5 12 5-5 3-12-2-15z" fill="#ffd23c" />
      </svg>
    ),
  },
  {
    name: "edge",
    icon: (
      <svg width="36" height="38" viewBox="0 0 36 38">
        <defs>
          <linearGradient id="eg" x1="0" y1=".3" x2="1" y2=".5">
            <stop offset="0" stopColor="#2a9fe6" />
            <stop offset=".5" stopColor="#34c6c2" />
            <stop offset="1" stopColor="#6cea50" />
          </linearGradient>
        </defs>
        <path d="M1 15C3 5 10 0 18 0c10 0 18 7 18 16 0 7-5 10.500-10.500 10.500-4 0-6-1.500-5-3.500C23 18 20 11 12 11 6 11 2 14 0 19z" fill="url(#eg)" />
        <path d="M0 19c1-5 6-8.500 12-8.500 5 0 8 2 9 5-4-3-9 1-8.500 7C13 30 20 35 27 34.500 22 39 14 39 8 35.500 2 31.500-.500 25 0 19z" fill="#0b78d1" />
        <path d="M14.500 17c-4 6 1 14 10 14.500 4 0 6.500-1.500 8.500-3-4 9-15 11.500-20.500 5C8.500 28.500 9 20 14.500 17z" fill="#12529c" />
      </svg>
    ),
  },
  {
    name: "files",
    dot: "h-[5px] w-[9px] bg-[#a298ab]",
    icon: (
      <svg width="36" height="36" viewBox="0 0 36 36">
        <path d="M0 3q0-2 2-2h9l3 3v6H0z" fill="#d99506" />
        <path d="M0 7h11l3-2h20q2 0 2 2v28H0z" fill="#fdc934" />
        <path d="M6 35V28q0-4 4-4h16q4 0 4 4v7z" fill="#0f70bd" />
        <path d="M11 29.500h14" stroke="#0a4c8a" strokeWidth="2" />
      </svg>
    ),
  },
  {
    name: "store",
    icon: (
      <svg width="36" height="38" viewBox="0 0 36 38">
        <path d="M9.500 8V2.500q0-1 1-1h15q1 0 1 1V8" fill="none" stroke="#1fa3e6" strokeWidth="2.400" />
        <path d="M.500 5.500h35V34q0 4-4 4h-27q-4 0-4-4z" fill="#efefef" />
        <path d="M10.500 14h7v7h-7z" fill="#f25022" />
        <path d="M18.500 14h7v7h-7z" fill="#7fba00" />
        <path d="M10.500 22.500h7v7h-7z" fill="#00a4ef" />
        <path d="M18.500 22.500h7v7h-7z" fill="#ffb900" />
      </svg>
    ),
  },
  {
    name: "mail",
    icon: (
      <svg width="36" height="38" viewBox="0 0 36 38">
        <path d="M0 13L18 1l18 12v6H0z" fill="#0a5ca8" />
        <path d="M4 12h28L18 25z" fill="#f3f3f3" />
        <path d="M0 13l18 12L36 13v21q0 2-2 2H2q-2 0-2-2z" fill="#2aa8ea" />
        <path d="M36 13v21q0 2-2 2L16 24.500z" fill="#50d0f7" />
        <path d="M4 12h28L18 24.500z" fill="#f3f3f3" />
        <path d="M0 13l34 23H2q-2 0-2-2z" fill="#1e88d8" opacity=".75" />
      </svg>
    ),
  },
  {
    name: "office",
    icon: (
      <svg width="30" height="38" viewBox="0 0 30 38">
        <path d="M18 1L4 7.500Q1 9 1 12v14q0 3 2 4l6-3V12l9-3z" fill="#d6324a" />
        <path d="M18 1l9 3q2 1 2 3v23q0 2-2 3l-9 3z" fill="#e8590c" />
        <path d="M6 30l12-1v8L8 33q-3-1-2-3z" fill="#c42020" />
        <path d="M18 1v8l-9 3V9z" fill="#a81e2c" />
      </svg>
    ),
  },
  {
    name: "netflix",
    icon: (
      <svg width="36" height="36" viewBox="0 0 36 36">
        <path d="M0 0h36v36H0z" fill="#000" />
        <path d="M12 7h4v22h-4zM20 7h4v22h-4z" fill="#b1060f" />
        <path d="M12 7h4l8 22h-4z" fill="#e50914" />
      </svg>
    ),
  },
  {
    name: "vpn",
    dot: "h-[5px] w-[9px] bg-[#a298ab]",
    icon: (
      <svg width="32" height="34" viewBox="0 0 32 34">
        <circle cx="16" cy="16" r="15.500" fill="#2c7ac9" />
        <path d="M4.500 26C5 17 11 9 16 9s11 8 11.500 17L21 17l-2 3-3-5-5 8-1.500-2z" fill="#fff" />
      </svg>
    ),
  },
  {
    name: "console",
    dot: "h-[5px] w-[9px] bg-[#a298ab]",
    icon: (
      <svg width="34" height="28" viewBox="0 0 34 28">
        <rect width="34" height="28" rx="1" fill="#b5bcc4" />
        <path d="M1 4h32v23H1z" fill="#050505" />
        <path d="M1 4h32v4Q12 8 1 19z" fill="#3a3a3a" />
        <text x="3" y="13" fontSize="7" fill="#e8e8e8" fontFamily="Liberation Mono">
          C:\_
        </text>
      </svg>
    ),
  },
  {
    name: "snip",
    dot: "h-[5px] w-[9px] bg-[#a298ab]",
    icon: (
      <svg width="36" height="38" viewBox="0 0 36 38">
        <rect x="0" y="0" width="27" height="28" rx="3" fill="#ececec" />
        <path d="M4.500 17V5H19v8" fill="none" stroke="#e04a14" strokeWidth="3" strokeDasharray="3.500 1.500" />
        <path d="M23 8v14l-5 9M8 22h15l7-1" stroke="#a3a6a8" strokeWidth="3.500" fill="none" />
        <circle cx="32" cy="21" r="3.200" fill="none" stroke="#1b9de2" strokeWidth="2.200" />
        <circle cx="19.500" cy="34" r="3.200" fill="none" stroke="#1b9de2" strokeWidth="2.200" />
      </svg>
    ),
  },
  {
    name: "notes",
    dot: "h-[5px] w-[9px] bg-[#a298ab]",
    icon: (
      <svg width="30" height="38" viewBox="0 0 30 38">
        <rect x="1" y="2" width="28" height="32" rx="1.500" fill="#5fcbe6" />
        <path d="M1 33h28v1.500H1z" fill="#fff" />
        <path d="M1 34.500h28V36q0 1.500-1.500 1.500h-25Q1 37.500 1 36z" fill="#b35a0f" />
        <path d="M4 0v5M9.500 0v5M15 0v5M20.500 0v5M26 0v5" stroke="#0d5b86" strokeWidth="2" />
        <path d="M6.500 13h17M6.500 19.500h17M6.500 26h17" stroke="#0a6ea0" strokeWidth="1.800" />
      </svg>
    ),
  },
  {
    name: "slack",
    dot: "h-[5px] w-[9px] bg-[#ff97a3]",
    icon: (
      <svg width="36" height="36" viewBox="0 0 36 36">
        <ellipse cx="18" cy="18" rx="17.300" ry="17.800" fill="#fff" />
        <g strokeWidth="4.600" strokeLinecap="round">
          <path d="M8.500 14.800h6" stroke="#36c5f0" />
          <path d="M14.800 8v.1" stroke="#36c5f0" />
          <path d="M21.200 8.500v6" stroke="#2eb67d" />
          <path d="M28 14.800h-.1" stroke="#2eb67d" />
          <path d="M27.500 21.200h-6" stroke="#ecb22e" />
          <path d="M21.200 28v-.1" stroke="#ecb22e" />
          <path d="M14.800 27.500v-6" stroke="#e01e5a" />
          <path d="M8 21.200h.1" stroke="#e01e5a" />
        </g>
      </svg>
    ),
  },
];

function TaskSlot({ t }: { t: (typeof taskIcons)[number] }) {
  const box =
    t.name === "slack"
      ? "relative flex h-[60px] w-[60px] items-center justify-center rounded-[5px] bg-[#46282c]"
      : t.name === "firefox"
        ? "relative flex h-[60px] w-[53px] items-center justify-center rounded-[5px] border border-[#46436b] bg-[#2c2a55] shadow-[7px_0_0_-1px_#35305a]"
        : "relative flex h-[60px] w-[60px] items-center justify-center";
  return (
    <div className={t.name === "firefox" ? "flex w-[66px] justify-center pr-[7px]" : "flex w-[66px] justify-center"}>
      <div className={box}>
        <div className={t.name === "firefox" ? "ml-[6px]" : ""}>{t.icon}</div>
        {t.dot && <div className={"absolute bottom-[1px] rounded-full " + t.dot} />}
        {t.name === "firefox" && <div className="absolute bottom-0 left-[17px] h-[5px] w-6 rounded-full bg-[#de9fe4]" />}
      </div>
    </div>
  );
}

function Taskbar() {
  return (
    <div className="relative flex h-[71px] shrink-0 items-center bg-[linear-gradient(90deg,#1a2229_0px,#1a232b_460px,#172236_610px,#171d4c_705px,#24194c_790px,#2c1a3d_860px,#37193c_970px,#3b1340_1060px,#3b144c_1200px,#3c103c_1330px,#3f1039_1600px,#361539_1780px,#2d192f_1912px)] font-['Open_Sans',sans-serif] text-[18px] whitespace-nowrap text-white">
      <div className="flex w-[415px] items-center pt-[1px] pl-[27px]">
        <div className="size-7 rounded-full bg-linear-to-br from-[#ffe56b] via-[#ffb52e] to-[#ff8c00]" />
        <div className="ml-[15px] pt-[2px] leading-6 tracking-[-0.4px]">
          <div>60°F</div>
          <div className="text-[#c2c4c6]">Sunny</div>
        </div>
      </div>
      <div className="flex items-center pt-[2px]">
        {taskIcons.map((t) => (
          <TaskSlot key={t.name} t={t} />
        ))}
      </div>
      <svg width="277" height="71" viewBox="1471 980 277 71" fill="none" stroke="#fff" strokeWidth="1.700">
        <path d="M1505.500 1020l8.500-9.500 8.500 9.500" strokeWidth="1.400" />
        <path d="M1552 1017c0-9 11-12 15-4 4 1 6 3 6.500 7l-6 1-10-3z" fill="#a78fa9" stroke="none" />
        <path d="M1555.500 1024.500c-7-1-6-9 0-8.500 4-3.500 8-1 9.500 1.500 6-.5 9 1.500 9.500 4.500q-.5 2.500-3 2.500z" fill="#f4f0f4" stroke="none" />
        <path d="M1610 1004.500q3 0 3 3v8q0 3-3 3t-3-3v-8q0-3 3-3zM1602 1013.500c0 11 16 11 16 0M1610 1022v6" stroke="#e2a4e8" />
        <path d="M1647 1013.500a15.500 15.500 0 0 1 22 0M1650.500 1017a10.500 10.500 0 0 1 15 0M1654 1020.500a5.500 5.500 0 0 1 8 0" />
        <circle cx="1658" cy="1023" r="1.500" fill="#fff" />
        <path d="M1683 1012.500h3.500l5.500-5v17l-5.500-5h-3.500zM1695 1011.500q3 4.500 0 9" />
        <path d="M1698.500 1008.500q5.500 7.500 0 15M1702 1006q7.500 10 0 20" stroke="#846a86" />
        <path d="M1729 1010h9q2 0 2 2v9q0 2-2 2h-11q-2 0-2-2v-2M1742 1014v5" />
        <path d="M1719.500 1006v3.500M1724.500 1006v3.500M1717.500 1010h9v2.500q0 3-4.500 3t-4.500-3zM1722 1015.500v5q0 3 3 3" fill="#fff" strokeWidth="1.300" />
        <path d="M1728 1013.500h9v6.500h-9z" fill="#fff" stroke="none" />
      </svg>
      <div className="w-[100px] pt-[1px] text-right leading-[23px] tracking-[-0.5px]">
        <div>1:40 PM</div>
        <div className="tracking-[-0.25px]">3/26/2022</div>
      </div>
      <div className="ml-[8px] flex h-6 w-[30px] items-center justify-center rounded-full bg-[#de9fe4] text-[16px] tracking-[-0.5px] text-black">10</div>
    </div>
  );
}

export default function App() {
  return (
    <div className="flex h-[1051px] w-full flex-col overflow-hidden bg-[#fafbfd]">
      <Chrome />
      <div className="relative flex h-[839px] shrink-0 flex-col overflow-hidden bg-[#fafbfd] font-['Inter',sans-serif]">
        <Header />
        <div className="flex h-[765px]">
          <SideNav />
          <div className="flex-1 pl-[10px]">
            <QueryBar />
            <Panels />
          </div>
        </div>
        <div className="absolute top-0 right-[2px] h-[213px] w-[7px] rounded-full bg-[#b0b2bd]" />
      </div>
      <Taskbar />
    </div>
  );
}
